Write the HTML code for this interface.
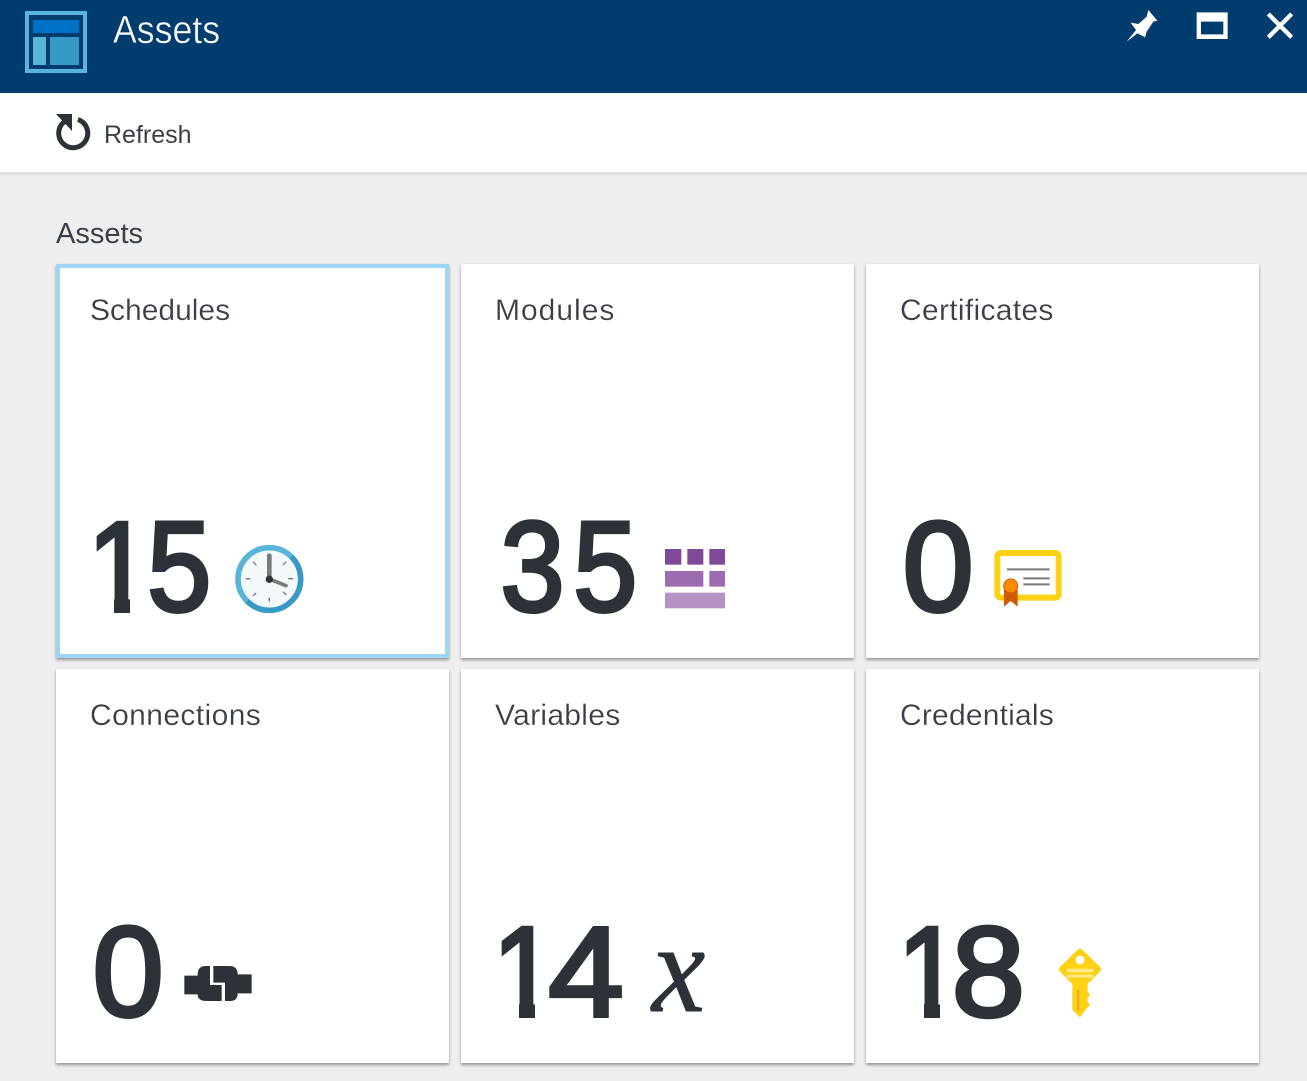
<!DOCTYPE html>
<html><head><meta charset="utf-8"><title>Assets</title>
<style>
html,body{margin:0;padding:0;width:1307px;height:1081px;overflow:hidden;background:#eeeeee}
.a{position:absolute}
.card{position:absolute;width:393px;height:394px;background:#fff;box-shadow:0 2px 3px rgba(0,0,0,.38);box-sizing:border-box}
svg{position:absolute;left:0;top:0}
text{font-family:"Liberation Sans",sans-serif}
.l{font-size:30px;fill:#3a3f47;stroke:#fff;stroke-width:.2px}
.n{font-size:128px;fill:#2d3239;stroke:#2d3239;stroke-width:4px}
</style></head><body>
<div class="a" style="left:0;top:0;width:1307px;height:93px;background:#003d6e"></div>
<div class="a" style="left:0;top:93px;width:1307px;height:79px;background:#fff;border-bottom:3px solid #e2e2e2"></div>
<div class="card" style="left:56px;top:264px;border:4px solid #9dd6f5"></div>
<div class="card" style="left:461px;top:264px"></div>
<div class="card" style="left:866px;top:264px"></div>
<div class="card" style="left:56px;top:669px"></div>
<div class="card" style="left:461px;top:669px"></div>
<div class="card" style="left:866px;top:669px"></div>
<svg width="1307" height="1081" viewBox="0 0 1307 1081">
<!-- logo -->
<rect x="27" y="13" width="58" height="58" fill="none" stroke="#59b4d9" stroke-width="4"/>
<rect x="33" y="20" width="46" height="13" fill="#0072c6"/>
<rect x="33" y="37" width="13" height="28" fill="#59b4d9"/>
<rect x="50" y="37" width="29" height="28" fill="#3999c6"/>
<text transform="translate(113,43) scale(.915,1)" font-size="39" fill="#fff" stroke="#003d6e" stroke-width=".5">Assets</text>
<!-- header controls -->
<g transform="translate(1100,0) scale(.3333)" fill="#fff">
<polygon points="145,30 172,62 160,65 140,95 135,112 112,100 80,125 108,90 92,68 115,72 140,50"/>
<path fill-rule="evenodd" d="M290 37H383V117H290ZM303 65V103H370V65Z"/>
<path d="M505 42L575 112M575 42L505 112" stroke="#fff" stroke-width="13" fill="none"/>
</g>
<!-- refresh -->
<path d="M78 119.500A14.500 14.500 0 1 1 64 122" fill="none" stroke="#2d3239" stroke-width="5"/>
<polygon points="56,114 72,114 72,131" fill="#2d3239"/>
<text x="104" y="143" font-size="25" fill="#3a3f47">Refresh</text>
<text x="56" y="243" font-size="29" fill="#3a3f47">Assets</text>
<!-- labels -->
<text class="l" x="90" y="320">Schedules</text>
<text class="l" x="495" y="320" letter-spacing="1">Modules</text>
<text class="l" x="900" y="320" letter-spacing=".3">Certificates</text>
<text class="l" x="90" y="725" letter-spacing=".4">Connections</text>
<text class="l" x="495" y="725" letter-spacing=".3">Variables</text>
<text class="l" x="900" y="725" letter-spacing=".2">Credentials</text>
<!-- numbers -->
<text class="n" transform="translate(87.400,611) scale(.9,1)">1</text>
<rect x="85" y="596" width="29" height="19" fill="#fff"/><rect x="130" y="596" width="32" height="19" fill="#fff"/>
<text class="n" transform="translate(147.300,611) scale(.9,1)">5</text>
<text class="n" transform="translate(500.500,611) scale(.9,1)">3</text>
<text class="n" transform="translate(573.300,611) scale(.9,1)">5</text>
<text class="n" transform="translate(902.500,611)">0</text>
<text class="n" transform="translate(92.500,1016)">0</text>
<text class="n" transform="translate(492.400,1016) scale(.9,1)">1</text>
<rect x="490" y="1001" width="29" height="19" fill="#fff"/><rect x="535" y="1001" width="32" height="19" fill="#fff"/>
<text class="n" transform="translate(548.300,1016) scale(1.06,1)">4</text>
<text class="n" transform="translate(897.400,1016) scale(.9,1)">1</text>
<rect x="895" y="1001" width="29" height="19" fill="#fff"/><rect x="940" y="1001" width="32" height="19" fill="#fff"/>
<text class="n" transform="translate(951.700,1016) scale(1.03,1)">8</text>
<!-- clock -->
<g transform="translate(225,535) scale(.3333)">
<defs><linearGradient id="g" x1="0" y1="0" x2="1" y2="1"><stop offset=".5" stop-color="#59b4d9"/><stop offset=".5" stop-color="#3999c6"/></linearGradient></defs>
<circle cx="133" cy="132" r="94" fill="#f4f9fc" stroke="url(#g)" stroke-width="17"/>
<path d="M133 132V62" stroke="#7a7a7a" stroke-width="14" stroke-linecap="round"/>
<path d="M133 132L183 152" stroke="#7a7a7a" stroke-width="11" stroke-linecap="round"/>
<circle cx="133" cy="133" r="11" fill="#2d3239"/>
<path d="M62 131H76M190 131H204M133 188V200M84 80L94 90M184 80L174 90M84 183L93 174M184 180L174 170" stroke="#7a7a7a" stroke-width="4" fill="none"/>
</g>
<!-- modules -->
<g transform="translate(655,540) scale(.3333)">
<g fill="#804998"><rect x="30" y="27" width="49" height="47"/><rect x="97" y="27" width="48" height="47"/><rect x="163" y="27" width="47" height="47"/></g>
<g fill="#9b6cb0"><rect x="30" y="93" width="115" height="47"/><rect x="163" y="93" width="47" height="47"/></g>
<rect x="30" y="158" width="180" height="47" fill="#b592c2"/>
</g>
<!-- certificate -->
<g transform="translate(985,540) scale(.3333)">
<rect x="37" y="39" width="184" height="134" rx="10" fill="#fff" stroke="#fcd116" stroke-width="18"/>
<path d="M66 88H194M115 115H194M115 133H194" stroke="#7a7a7a" stroke-width="6" fill="none"/>
<polygon points="57,150 57,200 77,183 98,200 98,150" fill="#d15900"/>
<circle cx="77" cy="138" r="21" fill="#ff8c00" stroke="#d15900" stroke-width="3"/>
</g>
<!-- connection -->
<g transform="translate(175,955) scale(.3333)" fill="#2d3239">
<path d="M28 62H68V58Q68 33 93 33H105V90H140V138H95Q68 138 68 118H28Z"/>
<path d="M115 33H163Q188 33 188 58H230V115H188Q188 138 165 138H150V83H115Z"/>
</g>
<!-- variable x -->
<text transform="translate(652,1011) scale(.95,1)" font-size="126" fill="#2d3239" stroke="#2d3239" stroke-width="1" style="font-family:'Liberation Serif',serif;font-style:italic">x</text>
<!-- key -->
<g transform="translate(1045,940) scale(.3333)">
<path d="M105 36L158 88L105 140L52 88Z" fill="#fcd116" stroke="#fcd116" stroke-width="20" stroke-linejoin="round"/>
<polygon points="82,130 128,130 128,155 135,165 125,180 135,195 125,205 105,232 82,210" fill="#fcd116"/>
<circle cx="105" cy="60" r="13" fill="#fff"/>
<rect x="66" y="86" width="79" height="11" fill="#ffe88a"/>
<rect x="66" y="104" width="79" height="9" fill="#ffe88a"/>
<rect x="96" y="150" width="7" height="62" fill="#f5a623"/>
</g>
</svg>
</body></html>
